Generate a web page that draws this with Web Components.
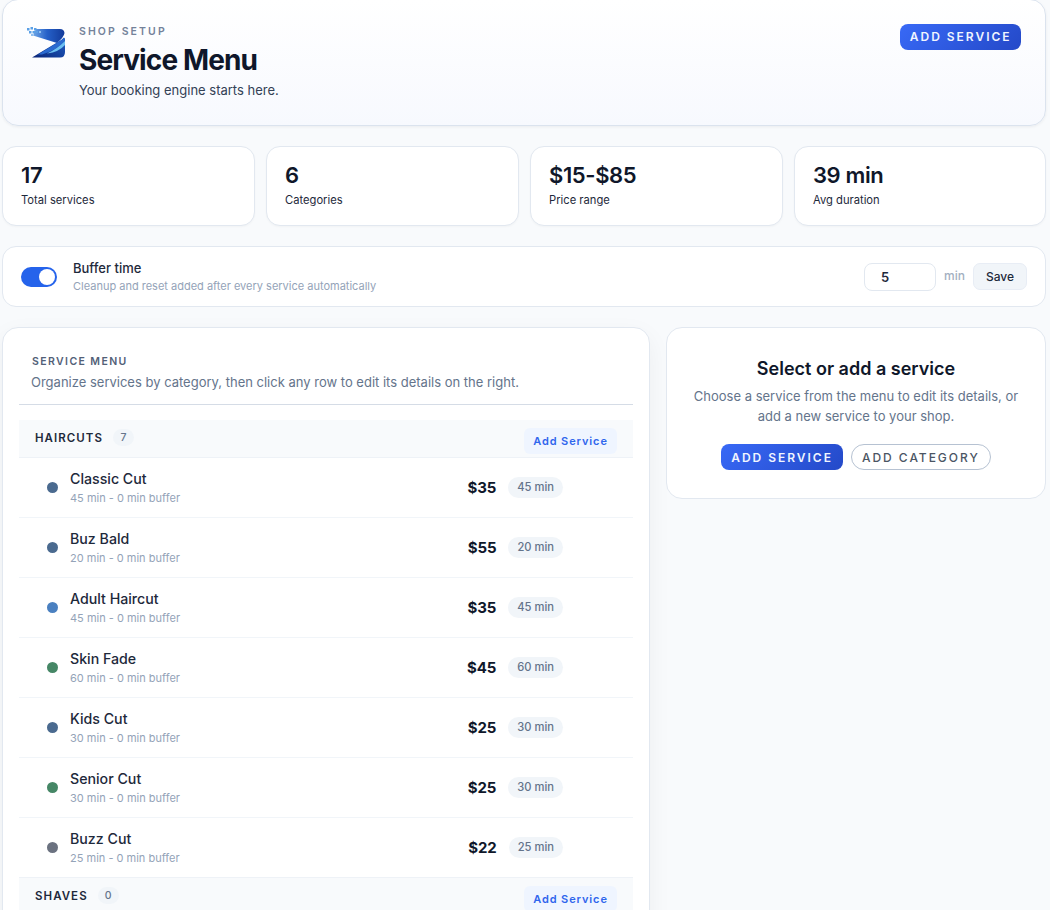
<!DOCTYPE html>
<html lang="en"><head><meta charset="utf-8"><title>Service Menu</title>
<style>
html{overflow:hidden;height:910px}
body{margin:0;background:#f8fafc;font-family:Inter,"Liberation Sans",sans-serif;color:#0f172a}
</style></head><body>
<x-page>
  <x-hero eyebrow="SHOP SETUP" title="Service Menu" sub="Your booking engine starts here."></x-hero>
  <x-stats>
    <x-stat value="17" label="Total services"></x-stat>
    <x-stat value="6" label="Categories"></x-stat>
    <x-stat value="$15-$85" label="Price range"></x-stat>
    <x-stat value="39 min" label="Avg duration"></x-stat>
  </x-stats>
  <x-buffer></x-buffer>
  <x-columns>
    <x-menu>
      <x-category name="HAIRCUTS" count="7">
        <x-service name="Classic Cut" meta="45 min - 0 min buffer" price="$35" dur="45 min" color="#4a6a8f"></x-service>
        <x-service name="Buz Bald" meta="20 min - 0 min buffer" price="$55" dur="20 min" color="#4a6a8f"></x-service>
        <x-service name="Adult Haircut" meta="45 min - 0 min buffer" price="$35" dur="45 min" color="#4a80c0"></x-service>
        <x-service name="Skin Fade" meta="60 min - 0 min buffer" price="$45" dur="60 min" color="#468766"></x-service>
        <x-service name="Kids Cut" meta="30 min - 0 min buffer" price="$25" dur="30 min" color="#4a6a8f"></x-service>
        <x-service name="Senior Cut" meta="30 min - 0 min buffer" price="$25" dur="30 min" color="#468766"></x-service>
        <x-service name="Buzz Cut" meta="25 min - 0 min buffer" price="$22" dur="25 min" color="#6b7280"></x-service>
      </x-category>
      <x-category name="SHAVES" count="0"></x-category>
    </x-menu>
    <x-empty></x-empty>
  </x-columns>
</x-page>
<template id="t-page"><style>
:host{display:flex;flex-direction:column;gap:20px;padding:0 4px 0 2px;box-sizing:border-box;width:1050px}
</style><slot></slot></template>
<template id="t-btn"><style>
:host{display:inline-flex}
div{display:inline-flex;align-items:center;justify-content:center;box-sizing:border-box;height:26px;padding:var(--pt,0px) var(--px,10px) 0;border-radius:8px;background:linear-gradient(135deg,#3869f6,#2449c8);color:#f1f5ff;font-size:12px;font-weight:600;letter-spacing:1.98px;line-height:1;white-space:nowrap}
:host([ghost]) div{background:#fff;border:1px solid #b6c2d2;border-radius:13px;color:#4b5563;font-weight:500}
</style><div><slot></slot></div></template>
<script>
function tpl(id){return document.getElementById(id).content.cloneNode(true)}
function esc(s){return String(s??'')}
class Base extends HTMLElement{
  render(html){const r=this.shadowRoot||this.attachShadow({mode:'open'});r.innerHTML=html}
}
class XPage extends HTMLElement{constructor(){super();this.attachShadow({mode:'open'}).append(tpl('t-page'))}}
class XBtn extends HTMLElement{constructor(){super();this.attachShadow({mode:'open'}).append(tpl('t-btn'))}}
class XHero extends Base{connectedCallback(){this.render(`<style>
:host{display:flex;justify-content:space-between;align-items:flex-start;box-sizing:border-box;height:127px;margin-top:-1px;padding:25px 24px 0 24px;border:1px solid #dbe3ee;border-radius:16px;background:linear-gradient(180deg,#fff,#f7f9fe);box-shadow:0 1px 3px rgba(15,23,42,.06)}
.l{display:flex;gap:14px}
svg{width:38px;height:31px;display:block;margin-top:2px;flex:none}
.e{margin-top:1px;font-size:10.5px;font-weight:600;letter-spacing:2.1px;color:#74829a;line-height:12px}
h1{margin:5px 0 0;font-size:28px;font-weight:700;letter-spacing:-.88px;line-height:34px;color:#0f172a}
p{margin:4px 0 0;font-size:13px;line-height:18px;color:#334155}
x-btn{margin-top:-1px;--px:9.5px}
</style>
<div class="l">
<svg viewBox="0 0 38 31" aria-hidden="true">
<defs><linearGradient id="a" x1="0" y1="0" x2="1" y2="0"><stop offset="0" stop-color="#6ea6e6"/><stop offset=".45" stop-color="#2560c8"/><stop offset="1" stop-color="#123a9a"/></linearGradient>
<linearGradient id="b" x1="0" y1="1" x2="1" y2=".2"><stop offset="0" stop-color="#0a2578"/><stop offset="1" stop-color="#1d58bd"/></linearGradient></defs>
<path d="M9 2 H32 Q37 1.500 37.500 6 Q37 10 30 16 L6 8.500 Z" fill="url(#a)"/>
<path d="M5 30.500 L30 15.500 Q35 13 37 10.500 Q38.500 12 38 14 V25 Q38 30.500 33 30.500Z" fill="url(#b)"/>
<path d="M11 27.500 L30 16 L37.500 11 V14 Q30 23 15 27.500Z" fill="#2a6ad0"/>
<path d="M20 26.500 Q30 22 38 14 V18 Q32 25 20 26.500Z" fill="#6cc0f2"/>
<g fill="#5aa0e6"><rect x="0" y="1" width="2.500" height="2.500"/><rect x="3.500" y="0" width="2.500" height="2.500"/><rect x="7" y="1" width="2.500" height="2.500"/><rect x="2" y="4" width="2.500" height="2.500"/><rect x="5.500" y="4" width="2.500" height="2.500"/><rect x="9" y="4" width="2" height="2"/><rect x="4" y="7" width="2" height="2" fill="#8fc0f0"/><rect x="12" y="4" width="2" height="2" fill="#8fc0f0"/></g>
</svg>
<div><div class="e">${esc(this.getAttribute('eyebrow'))}</div><h1>${esc(this.getAttribute('title'))}</h1><p>${esc(this.getAttribute('sub'))}</p></div>
</div><x-btn>ADD SERVICE</x-btn>`)}}
class XStats extends Base{connectedCallback(){this.render(`<style>:host{display:grid;grid-template-columns:253px 253px 253px 1fr;gap:11px}</style><slot></slot>`)}}
class XStat extends Base{connectedCallback(){this.render(`<style>
:host{display:block;box-sizing:border-box;height:80px;padding:14px 18px;border:1px solid #e2e8f0;border-radius:14px;background:#fff;box-shadow:0 1px 2px rgba(15,23,42,.03)}
.v{font-size:22px;font-weight:600;letter-spacing:-.38px;line-height:28px;color:#0f172a}
.l{margin-top:3px;font-size:11.2px;line-height:16px;color:#1e293b}
</style><div class="v">${esc(this.getAttribute('value'))}</div><div class="l">${esc(this.getAttribute('label'))}</div>`)}}
class XBuffer extends Base{connectedCallback(){this.render(`<style>
:host{display:flex;align-items:center;justify-content:space-between;box-sizing:border-box;height:61px;padding:0 18px;border:1px solid #e2e8f0;border-radius:14px;background:#fff}
.l{display:flex;align-items:center;gap:16px}
.t{width:36px;height:20px;border-radius:10px;background:#2563eb;position:relative}
.t::after{content:"";position:absolute;right:2px;top:2px;width:16px;height:16px;border-radius:50%;background:#fff}
.n{font-size:13px;font-weight:500;line-height:17px;color:#1e293b}
.d{font-size:11px;line-height:16px;color:#94a3b8;margin-top:1px}
.r{display:flex;align-items:center}
.i{box-sizing:border-box;width:72px;height:28px;border:1px solid #e2e8f0;border-radius:8px;padding-left:16px;font-size:13px;font-weight:600;line-height:27px;color:#1e293b;background:#fff}
.m{margin:0 8px;font-size:12px;font-weight:500;color:#a3afc1;position:relative;top:-1px}
.s{box-sizing:border-box;width:54px;height:27px;border:1px solid #e8edf5;border-radius:7px;background:#f1f5f9;font-size:12px;font-weight:500;color:#1e293b;display:flex;align-items:center;justify-content:center}
</style><div class="l"><div class="t"></div><div><div class="n">Buffer time</div><div class="d">Cleanup and reset added after every service automatically</div></div></div>
<div class="r"><div class="i">5</div><span class="m">min</span><div class="s">Save</div></div>`)}}
class XColumns extends Base{connectedCallback(){this.render(`<style>:host{display:grid;grid-template-columns:1fr 380px;gap:16px;align-items:start}</style><slot></slot>`)}}
class XMenu extends Base{connectedCallback(){this.render(`<style>
:host{display:block;box-sizing:border-box;padding:27px 16px 16px;border:1px solid #e2e8f0;border-radius:16px;background:#fff;box-shadow:0 8px 24px rgba(15,23,42,.05)}
.h{padding:0 12px 13px;border-bottom:1px solid #d5dce6;margin-bottom:15px}
.e{padding-left:1px;font-size:10.5px;font-weight:600;letter-spacing:1.4px;line-height:14px;color:#526077}
.s{margin-top:4px;font-size:13px;line-height:18px;color:#64748b}
</style><div class="h"><div class="e">SERVICE MENU</div><div class="s">Organize services by category, then click any row to edit its details on the right.</div></div><slot></slot>`)}}
class XCategory extends Base{connectedCallback(){this.render(`<style>
:host{display:block}
.c{display:flex;align-items:center;justify-content:space-between;box-sizing:border-box;height:38px;padding:0 16px;background:#f8fafc;border-bottom:1px solid #eef2f7}
.l{display:flex;align-items:center;gap:10px;position:relative;top:-1px}
.n{font-size:11.5px;font-weight:600;letter-spacing:1.05px;color:#1e293b}
.b{min-width:21px;height:17px;box-sizing:border-box;padding:0 4px;border-radius:9px;background:#f1f5f9;font-size:10.5px;font-weight:500;line-height:17px;text-align:center;color:#64748b}
.a{box-sizing:border-box;width:93px;height:26px;border-radius:6px;background:#eff5ff;color:#2f66ed;font-size:11px;font-weight:600;letter-spacing:.9px;display:flex;align-items:center;justify-content:center;position:relative;top:2px}
</style><div class="c"><div class="l"><span class="n">${esc(this.getAttribute('name'))}</span><span class="b">${esc(this.getAttribute('count'))}</span></div><div class="a">Add Service</div></div><slot></slot>`)}}
class XService extends Base{connectedCallback(){this.render(`<style>
:host{display:flex;align-items:center;box-sizing:border-box;height:60px;padding:0 70px 0 28px;border-bottom:1px solid #f1f5f9}
:host(:last-child){border-bottom:1px solid #eef2f7}
.d{width:11px;height:11px;border-radius:50%;background:${esc(this.getAttribute('color'))};flex:none;margin-right:12px}
.t{flex:1;min-width:0}
.n{font-size:14.2px;font-weight:500;line-height:18px;color:#1e293b}
.m{font-size:11px;line-height:16px;margin-top:2px;color:#94a3b8}
.p{font-size:15px;font-weight:700;letter-spacing:-.1px;color:#0f172a;margin-right:12px}
.u{box-sizing:border-box;height:21px;padding:0 9px;border-radius:11px;background:#f1f5f9;font-size:11.2px;font-weight:500;line-height:21px;color:#64748b;white-space:nowrap}
</style><span class="d"></span><div class="t"><div class="n">${esc(this.getAttribute('name'))}</div><div class="m">${esc(this.getAttribute('meta'))}</div></div><span class="p">${esc(this.getAttribute('price'))}</span><span class="u">${esc(this.getAttribute('dur'))}</span>`)}}
class XEmpty extends Base{connectedCallback(){this.render(`<style>
:host{display:block;box-sizing:border-box;height:172px;padding:29px 24px 0;border:1px solid #e2e8f0;border-radius:16px;background:#fff;text-align:center}
h2{margin:0;font-size:18px;font-weight:600;line-height:24px;color:#0f172a}
p{margin:5px 0 0;font-size:13px;line-height:20px;color:#64748b}
.a{display:flex;justify-content:center;gap:8px;margin-top:18px;--pt:1px}
</style><h2>Select or add a service</h2><p>Choose a service from the menu to edit its details, or<br>add a new service to your shop.</p><div class="a"><x-btn>ADD SERVICE</x-btn><x-btn ghost>ADD CATEGORY</x-btn></div>`)}}
for(const [n,c] of Object.entries({'x-page':XPage,'x-btn':XBtn,'x-hero':XHero,'x-stats':XStats,'x-stat':XStat,'x-buffer':XBuffer,'x-columns':XColumns,'x-menu':XMenu,'x-category':XCategory,'x-service':XService,'x-empty':XEmpty}))customElements.define(n,c);
</script>
</body></html>
